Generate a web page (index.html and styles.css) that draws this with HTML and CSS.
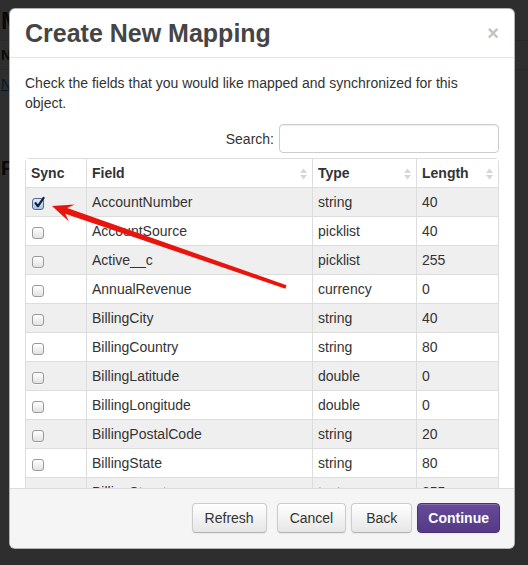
FILE: index.html
```html
<!DOCTYPE html>
<html>
<head>
<meta charset="utf-8">
<title>Create New Mapping</title>
<link rel="stylesheet" href="styles.css">
</head>
<body>
<div class="page">
  <h1 class="page-title">Mappings</h1>
  <table class="page-table">
    <tr><th>Name</th><th>Object</th></tr>
    <tr><td><a href="#">New Mapping</a></td><td>Account</td></tr>
  </table>
  <h2 class="page-sub">Fields</h2>
</div>
<div class="backdrop"></div>

<div class="modal">
  <div class="modal-header">
    <h3>Create New Mapping</h3>
    <span class="close">×</span>
  </div>
  <div class="modal-body">
    <p class="intro">Check the fields that you would like mapped and synchronized for this object.</p>
    <div class="search"><label>Search:</label><input type="text" class="search-input"></div>
    <table class="grid">
      <thead>
        <tr>
          <th class="c-sync">Sync</th>
          <th class="c-field"><div class="th-in"><span>Field</span><svg class="sort" viewBox="0 0 7 12" width="7" height="12"><polygon points="0,5 3.5,0.5 7,5"/><polygon points="0,7 7,7 3.5,11.5"/></svg></div></th>
          <th class="c-type"><div class="th-in"><span>Type</span><svg class="sort" viewBox="0 0 7 12" width="7" height="12"><polygon points="0,5 3.5,0.5 7,5"/><polygon points="0,7 7,7 3.5,11.5"/></svg></div></th>
          <th class="c-len"><div class="th-in"><span>Length</span><svg class="sort" viewBox="0 0 7 12" width="7" height="12"><polygon points="0,5 3.5,0.5 7,5"/><polygon points="0,7 7,7 3.5,11.5"/></svg></div></th>
        </tr>
      </thead>
      <tbody>
        <tr class="odd"><td><span class="cb checked"><svg viewBox="0 0 12 12" width="12" height="12"><path d="M2.6 6.2 L5 9.2 L10.6 0.8" fill="none" stroke="#14213d" stroke-width="2.2" stroke-linecap="round" stroke-linejoin="round"/></svg></span></td><td>AccountNumber</td><td>string</td><td>40</td></tr>
        <tr><td><span class="cb"></span></td><td>AccountSource</td><td>picklist</td><td>40</td></tr>
        <tr class="odd"><td><span class="cb"></span></td><td>Active__c</td><td>picklist</td><td>255</td></tr>
        <tr><td><span class="cb"></span></td><td>AnnualRevenue</td><td>currency</td><td>0</td></tr>
        <tr class="odd"><td><span class="cb"></span></td><td>BillingCity</td><td>string</td><td>40</td></tr>
        <tr><td><span class="cb"></span></td><td>BillingCountry</td><td>string</td><td>80</td></tr>
        <tr class="odd"><td><span class="cb"></span></td><td>BillingLatitude</td><td>double</td><td>0</td></tr>
        <tr><td><span class="cb"></span></td><td>BillingLongitude</td><td>double</td><td>0</td></tr>
        <tr class="odd"><td><span class="cb"></span></td><td>BillingPostalCode</td><td>string</td><td>20</td></tr>
        <tr><td><span class="cb"></span></td><td>BillingState</td><td>string</td><td>80</td></tr>
        <tr class="odd"><td><span class="cb"></span></td><td>BillingStreet</td><td>textarea</td><td>255</td></tr>
      </tbody>
    </table>
  </div>
  <div class="modal-footer">
    <button class="btn btn-refresh">Refresh</button>
    <button class="btn">Cancel</button>
    <button class="btn btn-back">Back</button>
    <button class="btn btn-primary">Continue</button>
  </div>
</div>

<svg class="arrow" width="528" height="565" viewBox="0 0 528 565">
  <polygon fill="#e8150f" points="52,206 74.7,204.4 67.2,208.1 286.6,285.3 285.4,288.7 65.2,213.7 68.9,221.4"/>
</svg>
</body>
</html>
```

FILE: styles.css
```css
* { box-sizing: border-box; }
html, body { margin: 0; padding: 0; }
body {
  width: 528px;
  height: 565px;
  overflow: hidden;
  position: relative;
  background: #fff;
  font-family: "Liberation Sans", Arial, Helvetica, sans-serif;
  font-size: 14px;
  line-height: 20px;
  color: #333;
}

/* page behind the modal */
.page { padding: 6px 0 0 1px; }
.page-title { margin: 0 0 4px; font-size: 24px; line-height: 30px; font-weight: bold; }
.page-table { width: 100%; border-collapse: collapse; }
.page-table th, .page-table td { border-top: 1px solid #ddd; padding: 4px 0; height: 28px; text-align: left; }
.page-table th { font-weight: bold; }
.page-table a { color: #08c; }
.page-sub { margin: 58px 0 0; font-size: 20px; line-height: 24px; font-weight: bold; }

.backdrop { position: absolute; inset: 0; background: rgba(0, 0, 0, 0.82); }

/* modal */
.modal {
  position: absolute;
  left: 9px;
  top: 8px;
  width: 506px;
  height: 541px;
  background: #fff;
  border: 1px solid rgba(0, 0, 0, 0.3);
  border-radius: 6px;
  display: flex;
  flex-direction: column;
  overflow: hidden;
}
.modal-header {
  flex: none;
  height: 49px;
  padding: 9px 15px;
  border-bottom: 1px solid #e5e5e5;
  display: flex;
  align-items: center;
  justify-content: space-between;
}
.modal-header h3 { margin: 0; font-size: 25px; line-height: 30px; font-weight: bold; color: #454545; }
.close { font-size: 20px; line-height: 20px; font-weight: bold; color: #c2c2c2; }

.modal-body { flex: 1; min-height: 0; overflow: hidden; padding: 15px 15px 0; }
.intro { margin: 0 0 11px; }
.search { display: flex; justify-content: flex-end; align-items: center; gap: 5px; height: 29px; margin-bottom: 5px; }
.search label { color: #333; }
.search-input {
  width: 220px;
  height: 29px;
  border: 1px solid #ccc;
  border-radius: 4px;
  box-shadow: inset 0 1px 1px rgba(0, 0, 0, 0.075);
  background: #fff;
  padding: 4px 6px;
  font: inherit;
}

.grid {
  width: 474px;
  border-collapse: separate;
  border-spacing: 0;
  border: 1px solid #ddd;
  border-radius: 4px;
  table-layout: fixed;
}
.grid th, .grid td {
  padding: 4px 5px;
  line-height: 20px;
  text-align: left;
  vertical-align: top;
  border-left: 1px solid #ddd;
  border-top: 1px solid #ddd;
}
.grid th { border-top: 0; font-weight: bold; background: #fff; }
.grid th:first-child, .grid td:first-child { border-left: 0; }
.c-sync { width: 60px; }
.c-field { width: 226px; }
.c-type { width: 104px; }
.c-len { width: 82px; }
.th-in { display: flex; justify-content: space-between; align-items: center; height: 20px; }
.sort { fill: #d6d6d6; flex: none; margin-top: 1px; }
.grid tbody tr { background: #fff; }
.grid tbody tr.odd { background: #efefef; }

.cb {
  display: block;
  width: 12px;
  height: 12px;
  margin: 6px 0 0 1px;
  border: 1px solid #9a9a9a;
  border-radius: 3px;
  background: linear-gradient(#ffffff, #e2e2e2);
  box-shadow: 0 1px 0 rgba(255, 255, 255, 0.6);
  position: relative;
}
.cb.checked {
  border-color: #55678f;
  background: linear-gradient(#dfe9f9, #a9c2ea);
}
.cb svg { position: absolute; left: 0; top: -2px; overflow: visible; }

/* footer */
.modal-footer {
  flex: none;
  height: 60px;
  padding: 14px 14px 15px 15px;
  background: #f5f5f5;
  border-top: 1px solid #ddd;
  display: flex;
  justify-content: flex-end;
  align-items: flex-start;
  gap: 5px;
}
.btn {
  height: 30px;
  padding: 0 12px;
  font: inherit;
  font-size: 14px;
  line-height: 20px;
  color: #333;
  border: 1px solid #ccc;
  border-bottom-color: #b3b3b3;
  border-radius: 4px;
  background: linear-gradient(#ffffff, #e6e6e6);
  box-shadow: inset 0 1px 0 rgba(255, 255, 255, 0.2), 0 1px 2px rgba(0, 0, 0, 0.05);
}
.btn-refresh { margin-right: 5px; }
.btn-back { padding: 0 14px; }
.btn-primary {
  color: #fff;
  font-weight: bold;
  border-color: #4a2f7a;
  background: linear-gradient(#674a9a, #543a86);
  padding: 0 10px;
}

.arrow { position: absolute; left: 0; top: 0; pointer-events: none; }
```
